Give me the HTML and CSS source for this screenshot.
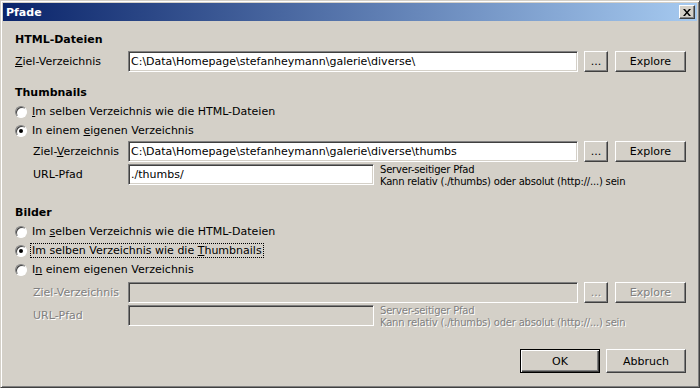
FILE: index.html
```html
<!doctype html>
<html>
  <head>
    <meta charset="utf-8">
    <link rel="stylesheet" href="styles.css">
    <title>Pfade</title>
  </head>
  <body>
    <div id="window">
      <div class="titlebar">
        <span class="title">Pfade</span>
        <span class="close-btn">
          <svg width="8" height="7" viewBox="0 0 8 7"><path d="M0 0h2l2 2.5 2-2.5h2l-3 3.5 3 3.5h-2l-2-2.5-2 2.5h-2l3-3.5z" fill="#000"/></svg>
        </span>
      </div>
      <div class="content">
        <div class="group-title first">HTML-Dateien</div>
        <div class="path-row">
          <span class="label"><u>Z</u>iel-Verzeichnis</span>
          <div class="field">C:\Data\Homepage\stefanheymann\galerie\diverse\</div>
          <button class="btn small">...</button>
          <button class="btn explore">Explore</button>
        </div>

        <div class="group-title second">Thumbnails</div>
        <div class="radio-row"><span class="radio"></span><span><u>I</u>m selben Verzeichnis wie die HTML-Dateien</span></div>
        <div class="radio-row"><span class="radio checked"></span><span>In einem <u>e</u>igenen Verzeichnis</span></div>
        <div class="path-row indent first-path">
          <span class="label">Ziel-<u>V</u>erzeichnis</span>
          <div class="field">C:\Data\Homepage\stefanheymann\galerie\diverse\thumbs</div>
          <button class="btn small">...</button>
          <button class="btn explore">Explore</button>
        </div>
        <div class="url-row indent">
          <span class="label">URL-Pfad</span>
          <div class="field">./thumbs/</div>
          <div class="hint">Server-seitiger Pfad<br>Kann relativ (./thumbs) oder absolut (http://...) sein</div>
        </div>

        <div class="group-title">Bilder</div>
        <div class="radio-row"><span class="radio"></span><span>Im <u>s</u>elben Verzeichnis wie die HTML-Dateien</span></div>
        <div class="radio-row"><span class="radio checked"></span><span class="focus">Im selben Verzeichnis wie die <u>T</u>humbnails</span></div>
        <div class="radio-row"><span class="radio"></span><span>I<u>n</u> einem eigenen Verzeichnis</span></div>
        <div class="path-row indent disabled last-block">
          <span class="label">Ziel-Verzeichnis</span>
          <div class="field"></div>
          <button class="btn small">...</button>
          <button class="btn explore">Explore</button>
        </div>
        <div class="url-row indent disabled">
          <span class="label">URL-Pfad</span>
          <div class="field"></div>
          <div class="hint">Server-seitiger Pfad<br>Kann relativ (./thumbs) oder absolut (http://...) sein</div>
        </div>

        <div class="button-bar">
          <button class="btn dialog default">OK</button>
          <button class="btn dialog">Abbruch</button>
        </div>
      </div>
    </div>
  </body>
</html>
```
FILE: styles.css
```css
body {
  margin: 0;
  font-family: "DejaVu Sans", sans-serif;
  font-size: 11px;
  color: #000;
  background: #d4d0c8;
}

u {
  text-decoration: underline;
  text-underline-offset: 1px;
}

#window {
  width: 700px;
  height: 388px;
  box-sizing: border-box;
  background: #d4d0c8;
  border: 1px solid;
  border-color: #d4d0c8 #404040 #404040 #d4d0c8;
  box-shadow: inset 1px 1px #fff, inset -1px -1px #808080;
  padding: 2px;
  display: flex;
  flex-direction: column;
}

.titlebar {
  height: 18px;
  background: linear-gradient(to right, #0a246a, #a6caf0);
  display: flex;
  align-items: center;
  justify-content: space-between;
  padding: 0 2px 0 3px;
}

.title {
  color: #fff;
  font-weight: bold;
}

.close-btn {
  width: 16px;
  height: 14px;
  box-sizing: border-box;
  background: #d4d0c8;
  border: 1px solid;
  border-color: #fff #404040 #404040 #fff;
  box-shadow: inset -1px -1px #808080;
  display: flex;
  align-items: center;
  justify-content: center;
}

.content {
  flex: 1;
  display: flex;
  flex-direction: column;
  padding: 0 10px 0 12px;
}

.group-title {
  font-weight: bold;
  line-height: 13px;
  margin-top: 21px;
}

.group-title.first {
  margin-top: 12px;
}

.group-title.second {
  margin-top: 14px;
}

.path-row {
  display: grid;
  grid-template-columns: 107px 450px 24px 72px;
  grid-template-rows: 21px;
  column-gap: 6px;
  align-items: center;
  height: 21px;
  margin-top: 5px;
}

.path-row .btn.explore {
  margin-left: 1px;
}

.url-row {
  display: grid;
  grid-template-columns: 107px 246px auto;
  grid-template-rows: 21px;
  column-gap: 6px;
  align-items: center;
  height: 21px;
  margin-top: 2px;
}

.indent {
  padding-left: 18px;
}

.indent.path-row {
  grid-template-columns: 89px 450px 24px 72px;
}

.indent.url-row {
  grid-template-columns: 89px 246px auto;
}

.first-path {
  margin-top: 1px;
}

.last-block {
  margin-top: 3px;
}

.field {
  height: 21px;
  box-sizing: border-box;
  background: #fff;
  border: 1px solid;
  border-color: #808080 #fff #fff #808080;
  box-shadow: inset 1px 1px #404040, inset -1px -1px #d4d0c8;
  padding: 0 2px;
  line-height: 19px;
  white-space: nowrap;
  overflow: hidden;
}

.disabled .field {
  background: #d4d0c8;
}

.disabled .label,
.disabled .hint,
.disabled .btn {
  color: #808080;
  text-shadow: 1px 1px #fff;
}

.hint {
  align-self: start;
  font-size: 10px;
  letter-spacing: -0.2px;
  line-height: 12px;
}

.btn {
  font-family: inherit;
  font-size: 11px;
  color: #000;
  background: #d4d0c8;
  height: 21px;
  box-sizing: border-box;
  border: 1px solid;
  border-color: #fff #404040 #404040 #fff;
  box-shadow: inset -1px -1px #808080;
  padding: 0;
}

.radio-row {
  display: flex;
  align-items: center;
  height: 19px;
  gap: 5px;
}

.group-title + .radio-row {
  margin-top: 3px;
}

.radio {
  width: 12px;
  height: 12px;
  box-sizing: border-box;
  border-radius: 50%;
  border: 1px solid;
  border-color: #808080 #fff #fff #808080;
  box-shadow: inset 1px 1px #404040;
  background: #fff;
  display: flex;
  align-items: center;
  justify-content: center;
}

.radio.checked::after {
  content: "";
  width: 4px;
  height: 4px;
  border-radius: 50%;
  background: #000;
}

.focus {
  outline: 1px dotted #000;
  outline-offset: 0;
  padding: 0 1px;
  margin-left: -1px;
}

.button-bar {
  display: flex;
  justify-content: flex-end;
  gap: 6px;
  margin-top: 23px;
  padding-right: 1px;
}

.btn.dialog {
  width: 80px;
  height: 24px;
}

.btn.default {
  border: 1px solid #000;
  box-shadow: inset 1px 1px #fff, inset -1px -1px #404040, inset -2px -2px #808080;
}
```
